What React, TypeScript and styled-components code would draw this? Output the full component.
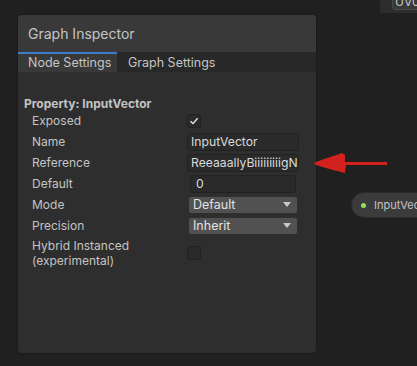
import styled, { createGlobalStyle } from 'styled-components';

const GlobalStyle = createGlobalStyle`
  html, body {
    margin: 0;
    padding: 0;
    background: #202020;
    overflow: hidden;
  }
  body {
    font-family: Inter, "Noto Sans", "Liberation Sans", sans-serif;
  }
`;

const colors = {
  canvas: '#202020',
  panel: '#2e2e2e',
  header: '#393939',
  tabBar: '#282828',
  text: '#c4c4c4',
  bright: '#dadada',
  field: '#2a2a2a',
  fieldBorder: '#212121',
  dropdown: '#515151',
  blue: '#3d7dc9',
  red: '#d3211d',
};

type Row = {
  label: string;
  kind: 'check' | 'text' | 'inset' | 'select';
  value?: string;
  checked?: boolean;
};

const rows: Row[] = [
  { label: 'Exposed', kind: 'check', checked: true },
  { label: 'Name', kind: 'text', value: 'InputVector' },
  { label: 'Reference', kind: 'text', value: 'ReeaaallyBiiiiiiiiigN' },
  { label: 'Default', kind: 'inset', value: '0' },
  { label: 'Mode', kind: 'select', value: 'Default' },
  { label: 'Precision', kind: 'select', value: 'Inherit' },
];

const Check = ({ checked }: { checked?: boolean }) => (
  <CheckBox>
    {checked && (
      <svg width="10" height="10" viewBox="0 0 10 10">
        <path d="M1.5 5.2 L4 7.6 L8.6 2.2" fill="none" stroke="#e6e6e6" strokeWidth="1.4" />
      </svg>
    )}
  </CheckBox>
);

const Control = ({ row }: { row: Row }) => {
  if (row.kind === 'check') return <Check checked={row.checked} />;
  if (row.kind === 'select')
    return (
      <Select>
        <span>{row.value}</span>
        <Caret />
      </Select>
    );
  return <TextField $inset={row.kind === 'inset'}>{row.value}</TextField>;
};

const App = () => {
  return (
    <Canvas>
      <GlobalStyle />
      <UvWidget>
        <UvField>UV0</UvField>
      </UvWidget>

      <Panel>
        <Header>Graph Inspector</Header>
        <Tabs>
          <Tab $active>Node Settings</Tab>
          <Tab>Graph Settings</Tab>
        </Tabs>
        <Body>
          <Heading>Property: InputVector</Heading>
          {rows.map((r) => (
            <FieldRow key={r.label}>
              <Label>{r.label}</Label>
              <Control row={r} />
            </FieldRow>
          ))}
          <FieldRow $tall>
            <Label>
              Hybrid Instanced
              <br />
              (experimental)
            </Label>
            <Check />
          </FieldRow>
        </Body>
      </Panel>

      {/* hand-drawn red annotation arrow */}
      <Arrow width="80" height="24" viewBox="0 0 80 24">
        <path
          d="M1 11 C8 8 20 4 29 1 L32 3 L32 10 L74 10 L74 13 L33 13 L32 21 C24 19 12 16 3 13 Z"
          fill={colors.red}
        />
      </Arrow>

      <Node>
        <Dot />
        <NodeLabel>InputVector</NodeLabel>
      </Node>
    </Canvas>
  );
};

const Canvas = styled.div`
  position: relative;
  width: 417px;
  height: 366px;
  background: ${colors.canvas};
  overflow: hidden;
  padding: 15px 0 0 18px;
  box-sizing: border-box;
`;

const UvWidget = styled.div`
  position: absolute;
  top: 0;
  left: 380px;
  width: 40px;
  height: 13px;
  background: #2d2d2d;
`;

const UvField = styled.div`
  position: absolute;
  top: -6px;
  left: 12px;
  width: 40px;
  height: 16px;
  box-sizing: border-box;
  border: 1px solid #4a4a4a;
  border-radius: 3px;
  background: #383838;
  color: ${colors.text};
  font-size: 12px;
  line-height: 14px;
  padding-left: 2px;
`;

const Panel = styled.div`
  width: 298px;
  height: 338px;
  background: ${colors.panel};
  border-radius: 4px;
  box-shadow: 0 0 0 1px #1b1b1b;
  overflow: hidden;
  display: flex;
  flex-direction: column;
`;

const Header = styled.div`
  height: 37px;
  display: flex;
  align-items: center;
  padding-left: 10px;
  background: ${colors.header};
  color: ${colors.text};
  font-size: 14px;
`;

const Tabs = styled.div`
  height: 20px;
  display: flex;
  background: ${colors.tabBar};
`;

const Tab = styled.div<{ $active?: boolean }>`
  width: 99px;
  box-sizing: border-box;
  display: flex;
  align-items: center;
  padding-left: ${(p) => (p.$active ? '10px' : '11px')};
  background: ${(p) => (p.$active ? colors.header : 'transparent')};
  border-top: 2px solid ${(p) => (p.$active ? colors.blue : 'transparent')};
  color: ${colors.text};
  font-size: 12.5px;
  line-height: 16px;
  white-space: nowrap;
`;

const Body = styled.div`
  display: flex;
  flex-direction: column;
  padding: 25px 0 0 6px;
`;

const Heading = styled.div`
  height: 13px;
  line-height: 13px;
  font-size: 12px;
  font-weight: 700;
  color: ${colors.text};
`;

const FieldRow = styled.div<{ $tall?: boolean }>`
  display: grid;
  grid-template-columns: 155px 112px;
  align-items: center;
  padding-left: 8px;
  height: ${(p) => (p.$tall ? '30px' : '21px')};
  margin-top: ${(p) => (p.$tall ? '2px' : '0')};
`;

const Label = styled.div`
  font-size: 12px;
  line-height: 15px;
  color: ${colors.text};
`;

const CheckBox = styled.div`
  width: 14px;
  height: 14px;
  box-sizing: border-box;
  background: ${colors.field};
  border: 1px solid ${colors.fieldBorder};
  border-radius: 3px;
  display: flex;
  align-items: center;
  justify-content: center;
`;

const TextField = styled.div<{ $inset?: boolean }>`
  height: 18px;
  box-sizing: border-box;
  margin: 0 ${(p) => (p.$inset ? '3px' : '0')};
  padding-left: ${(p) => (p.$inset ? '5px' : '3px')};
  background: ${colors.field};
  border: 1px solid ${colors.fieldBorder};
  border-radius: 3px;
  color: ${colors.bright};
  font-size: 12.2px;
  line-height: 16px;
  white-space: nowrap;
  overflow: hidden;
`;

const Select = styled.div`
  height: 18px;
  box-sizing: border-box;
  margin: 0 1px;
  padding: 0 6px 0 4px;
  display: flex;
  align-items: center;
  justify-content: space-between;
  background: ${colors.dropdown};
  border: 1px solid #2f2f2f;
  border-radius: 3px;
  color: #e2e2e2;
  font-size: 12.5px;
`;

const Caret = styled.span`
  width: 0;
  height: 0;
  border-left: 4px solid transparent;
  border-right: 4px solid transparent;
  border-top: 5px solid #c8c8c8;
`;

const Arrow = styled.svg`
  position: absolute;
  left: 313px;
  top: 152px;
`;

const Node = styled.div`
  position: absolute;
  left: 351px;
  top: 192px;
  width: 120px;
  height: 26px;
  box-sizing: border-box;
  border-radius: 13px;
  background: #3b3b3b;
  border: 1px solid #2b2b2b;
  display: flex;
  align-items: center;
  padding-left: 9px;
  gap: 8px;
`;

const Dot = styled.span`
  width: 5px;
  height: 5px;
  border-radius: 50%;
  background: #8fe35a;
`;

const NodeLabel = styled.span`
  color: ${colors.text};
  font-size: 11px;
  white-space: nowrap;
`;

export default App;
